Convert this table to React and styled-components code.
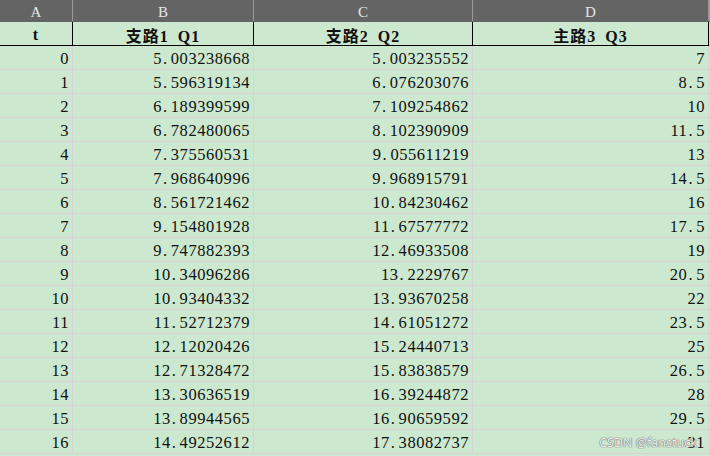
import styled, { createGlobalStyle } from 'styled-components'

const GlobalStyle = createGlobalStyle`
    html, body {
        margin: 0;
        padding: 0;
        background: #cce8cf;
        overflow: hidden;
    }
`

const Sheet = styled.div`
    position: relative;
    width: 710px;
    height: 456px;
    background: #cce8cf;
    overflow: hidden;
`

const Row = styled.div`
    display: grid;
    grid-template-columns: 73px 181px 219px 236px 1fr;
    height: ${p => p.$h}px;
    box-sizing: border-box;
    border-bottom: 1px solid ${p => p.$line};
    background: ${p => p.$bg || 'transparent'};
`

const Letter = styled.div`
    display: flex;
    align-items: center;
    justify-content: center;
    border-right: 1px solid #9a9a9a;
    color: #e6e6e6;
    font-family: "Liberation Serif", serif;
    font-size: 15px;
    padding-top: 3px;
`

const HeadCell = styled.div`
    display: flex;
    align-items: center;
    justify-content: center;
    border-right: 1px solid ${p => p.$edge ? '#d4d4d4' : '#000'};
    color: #111;
    font-family: "Liberation Serif", "Noto Sans CJK SC", serif;
    font-weight: bold;
    font-size: 16px;
    letter-spacing: 1px;
    word-spacing: 4px;
    padding-top: 1px;
`

const Cell = styled.div`
    display: flex;
    align-items: center;
    justify-content: flex-end;
    padding-right: 3px;
    border-right: 1px solid #d4d4d4;
    color: #111;
    font-family: "Liberation Serif", serif;
    font-size: 16.5px;
    letter-spacing: 0.55px;
    padding-top: 2px;
    white-space: pre;
`

const Dot = styled.span`
    display: inline-block;
    width: 8.8px;
    padding-left: 1px;
    box-sizing: border-box;
    text-align: left;
`

const Watermark = styled.div`
    position: absolute;
    right: 13px;
    bottom: 5px;
    font-family: "Noto Sans", sans-serif;
    font-size: 12.5px;
    color: rgba(250, 252, 250, 0.9);
    text-shadow: 0 0 1px #7a7a7a, 0 0 1px #7a7a7a, 0 0 1px #7a7a7a;
`

const data = [
    [0, '5.003238668', '5.003235552', '7'],
    [1, '5.596319134', '6.076203076', '8.5'],
    [2, '6.189399599', '7.109254862', '10'],
    [3, '6.782480065', '8.102390909', '11.5'],
    [4, '7.375560531', '9.055611219', '13'],
    [5, '7.968640996', '9.968915791', '14.5'],
    [6, '8.561721462', '10.84230462', '16'],
    [7, '9.154801928', '11.67577772', '17.5'],
    [8, '9.747882393', '12.46933508', '19'],
    [9, '10.34096286', '13.2229767', '20.5'],
    [10, '10.93404332', '13.93670258', '22'],
    [11, '11.52712379', '14.61051272', '23.5'],
    [12, '12.12020426', '15.24440713', '25'],
    [13, '12.71328472', '15.83838579', '26.5'],
    [14, '13.30636519', '16.39244872', '28'],
    [15, '13.89944565', '16.90659592', '29.5'],
    [16, '14.49252612', '17.38082737', '31'],
]

// the sheet font puts the decimal point in a full digit cell
const Num = ({ value }) => {
    const s = String(value)
    const i = s.indexOf('.')
    if (i < 0) return <Cell>{s}</Cell>
    return <Cell>{s.slice(0, i)}<Dot>.</Dot>{s.slice(i + 1)}</Cell>
}

const App = () => {
    return <Sheet>
        <GlobalStyle />
        <Row $h={22} $line="#646464" $bg="#646464">
            <Letter>A</Letter>
            <Letter>B</Letter>
            <Letter>C</Letter>
            <Letter>D</Letter>
            <Letter />
        </Row>
        <Row $h={24} $line="#000">
            <HeadCell>t</HeadCell>
            <HeadCell>支路1 Q1</HeadCell>
            <HeadCell>支路2 Q2</HeadCell>
            <HeadCell>主路3 Q3</HeadCell>
            <HeadCell $edge />
        </Row>
        {data.map((r) => (
            <Row key={r[0]} $h={24} $line="#d4d4d4">
                <Num value={r[0]} />
                <Num value={r[1]} />
                <Num value={r[2]} />
                <Num value={r[3]} />
                <Cell />
            </Row>
        ))}
        <Watermark>CSDN @fanstuck</Watermark>
    </Sheet>
}

export default App
